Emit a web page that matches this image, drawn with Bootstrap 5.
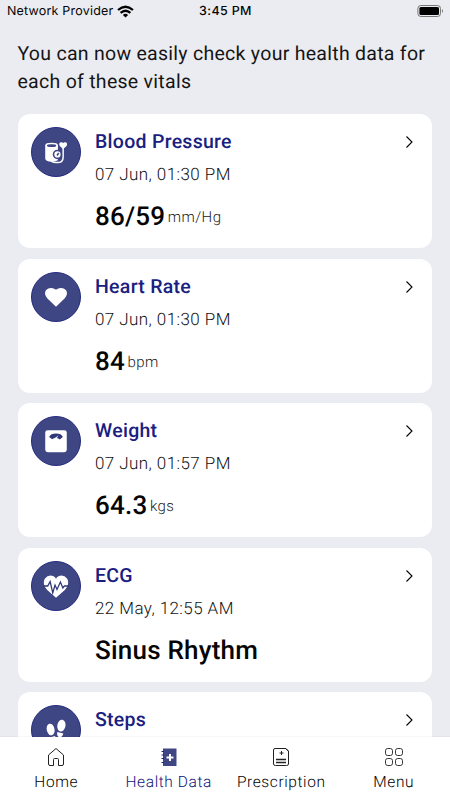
<!DOCTYPE html>
<html lang="en">
<head>
<meta charset="utf-8">
<meta name="viewport" content="width=device-width, initial-scale=1">
<title>Health Data</title>
<link href="https://cdn.jsdelivr.net/npm/bootstrap@5.3.0/dist/css/bootstrap.min.css" rel="stylesheet">
<style>
  body { background: #ebecf1; font-family: Roboto, sans-serif; color: #050505; text-rendering: geometricPrecision; }
  .status { height: 23px; padding: 0 6px 0 7px; font-family: Inter, sans-serif; font-size: 12.5px; line-height: 23px; }
  .status .carrier { letter-spacing: .2px; }
  .status .clock { font-weight: 500; letter-spacing: .35px; }
  .intro { font-size: 19.5px; line-height: 28px; letter-spacing: .28px; margin: 17px 0 0 17.5px; height: 74px; white-space: nowrap; color: #151515; }
  .vitals { padding: 0 18px; gap: 10.6px; }
  .vital { height: 134px; flex: none; border: 0; border-radius: 12px; padding: 13px 14px 0 13px; background: #fff; }
  .disc { width: 50px; height: 50px; flex: none; background: #3e4684; border: 1px solid #252c7e; }
  .disc svg { width: 48px; height: 48px; display: block; }
  .info { margin-left: 14px; white-space: nowrap; }
  .title { font-size: 19.5px; line-height: 28px; padding-top: 1px; font-weight: 500; letter-spacing: .28px; color: #19207f; }
  .date { font-size: 17px; line-height: 24px; margin-top: 7px; font-weight: 300; letter-spacing: .42px; color: #111; }
  .value { font-size: 26px; line-height: 34px; margin-top: 13px; font-weight: 500; letter-spacing: .22px; }
  .unit { font-size: 15px; font-weight: 300; letter-spacing: .4px; margin-left: 2.5px; color: #222; }
  .chev { width: 18px; height: 18px; margin-top: 6px; }
  .tabs { height: 63px; background: #fff; box-shadow: 0 -1px 1px rgba(0,0,0,.03); }
  .tab { width: 112.5px; padding-top: 9px; font-size: 15.5px; line-height: 20px; font-weight: 300; letter-spacing: .6px; color: #000; white-space: nowrap; }
  .tab svg { width: 24px; height: 24px; margin-bottom: 2px; }
  .tab.current { color: #0d1478; }
</style>
</head>
<body class="vh-100 overflow-hidden d-flex flex-column">
<header class="status row g-0 flex-nowrap align-items-center">
  <div class="col d-flex align-items-center text-nowrap">
    <span class="carrier">Network Provider</span>
    <svg class="ms-1" width="17" height="13" viewBox="0 0 17 13" fill="none" stroke="#000" stroke-width="2.3"><path d="M1 5Q8.500-1.500 16 5M3.600 7.900Q8.500 3.500 13.400 7.900"/><path d="M5.900 9.900Q8.500 7.800 11.100 9.900L8.500 12.400Z" fill="#000" stroke="none"/></svg>
  </div>
  <div class="col-auto clock">3:45 PM</div>
  <div class="col d-flex justify-content-end align-items-center">
    <svg width="27" height="13" viewBox="0 0 27 13"><rect x=".9" y=".5" width="22.6" height="11" rx="3" fill="none" stroke="#777"/><rect x="2.400" y="2" width="19.600" height="8" rx="1.500"/><path d="M25 4Q27 6 25 8Z" fill="#777"/></svg>
  </div>
</header>

<p class="intro flex-shrink-0 mb-0">You can now easily check your health data for<br>each of these vitals</p>

<main class="vitals d-flex flex-column flex-grow-1 overflow-hidden">
  <section class="vital card flex-row">
    <div class="disc rounded-circle"><svg viewBox="0 0 49 49">
      <path d="M13.500 17.500Q13.500 15 20 15T26.500 17.500V33Q24 34.500 20 34.500Q13.500 34.500 13.500 31Z" fill="#fff"/>
      <ellipse cx="20" cy="18" rx="4.800" ry="1.400" fill="#3e4684"/>
      <path d="M31.800 18V29.500Q31.800 35.300 26 35.300Q22 35.500 19.500 33.800" fill="none" stroke="#fff" stroke-width="1.500"/>
      <circle cx="26" cy="27" r="4.800" fill="#3e4684"/>
      <circle cx="26" cy="27" r="3.200" fill="#fff"/><path d="M25.500 28L27.300 25.600" stroke="#3e4684" stroke-width="1.600"/>
      <path d="M31.800 21.500L28.300 18.500Q26.800 14.800 29.800 14.500Q31.200 14.500 31.800 15.300Q32.400 14.500 33.800 14.500Q36.800 14.800 35.300 18.500Z" fill="#fff"/></svg></div>
    <div class="info flex-grow-1">
      <div class="title">Blood Pressure</div>
      <div class="date">07 Jun, 01:30 PM</div>
      <div class="value d-flex align-items-center">86/59<span class="unit">mm/Hg</span></div>
    </div>
    <svg class="chev" viewBox="0 0 18 18" fill="none" stroke="#000" stroke-width="1.1"><path d="M6.500 3.500L12 9L6.500 14.500"/></svg>
  </section>

  <section class="vital card flex-row">
    <div class="disc rounded-circle"><svg viewBox="0 0 49 49"><path d="M24.500 34.500L15.500 25.700Q11.800 21.500 14.200 17.700Q17.200 14.300 21.400 15.500Q23.500 16.300 24.500 17Q25.500 16.300 27.600 15.500Q31.800 14.300 34.800 17.700Q37.200 21.500 33.500 25.700Z" fill="#fff"/></svg></div>
    <div class="info flex-grow-1">
      <div class="title">Heart Rate</div>
      <div class="date">07 Jun, 01:30 PM</div>
      <div class="value d-flex align-items-center">84<span class="unit">bpm</span></div>
    </div>
    <svg class="chev" viewBox="0 0 18 18" fill="none" stroke="#000" stroke-width="1.1"><path d="M6.500 3.500L12 9L6.500 14.500"/></svg>
  </section>

  <section class="vital card flex-row">
    <div class="disc rounded-circle"><svg viewBox="0 0 49 49"><rect x="13.500" y="13.500" width="22" height="22.500" rx="2.500" fill="#fff"/><path d="M17.500 20.300Q19 16.800 24.500 16.800T31.500 20.300L28.300 23Q27 21.700 25.300 21.500L27.200 19L23.200 21.400Q21.700 21.700 20.600 22.700Z" fill="#303978"/></svg></div>
    <div class="info flex-grow-1">
      <div class="title">Weight</div>
      <div class="date">07 Jun, 01:57 PM</div>
      <div class="value d-flex align-items-center">64.3<span class="unit">kgs</span></div>
    </div>
    <svg class="chev" viewBox="0 0 18 18" fill="none" stroke="#000" stroke-width="1.1"><path d="M6.500 3.500L12 9L6.500 14.500"/></svg>
  </section>

  <section class="vital card flex-row">
    <div class="disc rounded-circle"><svg viewBox="0 0 49 49"><path d="M24.500 36.500L15.500 28.500Q10 22.500 13 17Q17 12.200 22 14.500Q23.700 15.500 24.500 17Q25.300 15.500 27 14.500Q32 12.200 36 17Q39 22.500 33.500 28.500Z" fill="#fff"/><path d="M11.500 24.500H16L18.500 20L21.200 31.500L23.500 23.500L25.500 28L29 20.500L31.500 26.500L33 24.500H37.500" fill="none" stroke="#303978" stroke-width="1.300"/></svg></div>
    <div class="info flex-grow-1">
      <div class="title">ECG</div>
      <div class="date">22 May, 12:55 AM</div>
      <div class="value">Sinus Rhythm</div>
    </div>
    <svg class="chev" viewBox="0 0 18 18" fill="none" stroke="#000" stroke-width="1.1"><path d="M6.500 3.500L12 9L6.500 14.500"/></svg>
  </section>

  <section class="vital card flex-row">
    <div class="disc rounded-circle"><svg viewBox="0 0 49 49" fill="#fff"><ellipse cx="19" cy="24" rx="4" ry="6" transform="rotate(-12 19 24)"/><ellipse cx="30" cy="20" rx="4.200" ry="6" transform="rotate(10 30 20)"/><path d="M18.500 32L23.500 30.500Q25.500 35 22.500 36Q19.500 36 18.500 32ZM25.800 26.500L32 28Q31 32 28 32Q25 31 25.800 26.500Z"/></svg></div>
    <div class="info flex-grow-1">
      <div class="title">Steps</div>
    </div>
    <svg class="chev" viewBox="0 0 18 18" fill="none" stroke="#000" stroke-width="1.1"><path d="M6.500 3.500L12 9L6.500 14.500"/></svg>
  </section>
</main>

<nav class="tabs d-flex flex-shrink-0 position-relative">
  <div class="tab d-flex flex-column align-items-center"><svg viewBox="0 0 24 24" fill="none" stroke="#222"><path d="M4.500 9L12 2.500L19.500 9V18Q19.500 19.500 18 19.500H14.500V13.500Q14.500 12.500 13.500 12.500H10.500Q9.500 12.500 9.500 13.500V19.500H6Q4.500 19.500 4.500 18Z"/></svg>Home</div>
  <div class="tab current d-flex flex-column align-items-center"><svg viewBox="0 0 24 24"><path d="M6 2.500H19.500V20H6Z" fill="#3e4684"/><path d="M4.500 5.500H7M4.500 9H7M4.500 12.500H7M4.500 16.500H7" stroke="#19207f"/><path d="M13 8V15M9.500 11.500H16.500" stroke="#fff" stroke-width="2"/></svg>Health Data</div>
  <div class="tab d-flex flex-column align-items-center"><svg viewBox="0 0 24 24" fill="none" stroke="#222"><path d="M6 2.500H17L19.500 5V18Q19.500 19.500 17.500 19.500H6.500Q4.500 19.500 4.500 18V4Q4.500 2.500 6 2.500ZM16.500 2.500L19.500 5.500M12.500 5V9M10.500 7H14.500"/><path d="M7 13.500H17M7 16.500H17" stroke-width="1.300"/></svg>Prescription</div>
  <div class="tab d-flex flex-column align-items-center"><svg viewBox="0 0 24 24" fill="none" stroke="#333"><rect x="3.500" y="2.500" width="7" height="7" rx="2.200"/><rect x="13.500" y="2.500" width="7" height="7" rx="2.200"/><rect x="3.500" y="12.500" width="7" height="7" rx="2.200"/><rect x="13.500" y="12.500" width="7" height="7" rx="2.200"/></svg>Menu</div>
</nav>
<script src="https://cdn.jsdelivr.net/npm/bootstrap@5.3.0/dist/js/bootstrap.bundle.min.js"></script>
</body>
</html>
